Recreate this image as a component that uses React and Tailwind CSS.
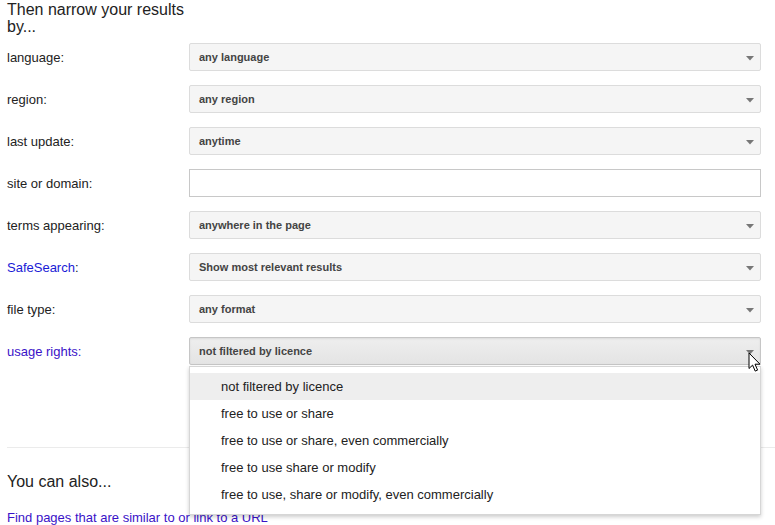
const rows = [
  { label: 'language:', value: 'any language' },
  { label: 'region:', value: 'any region' },
  { label: 'last update:', value: 'anytime' },
  { label: 'site or domain:', input: true },
  { label: 'terms appearing:', value: 'anywhere in the page' },
  { label: 'SafeSearch', link: true, value: 'Show most relevant results' },
  { label: 'file type:', value: 'any format' },
];

const options = [
  'not filtered by licence',
  'free to use or share',
  'free to use or share, even commercially',
  'free to use share or modify',
  'free to use, share or modify, even commercially',
];

function Arrow() {
  return (
    <svg width="8" height="5" viewBox="0 0 8 5" className="absolute right-[6px] top-[12px]">
      <path d="M0 0h8L4 4.5z" fill="#777" />
    </svg>
  );
}

function Select({ value, active, children }) {
  return (
    <div
      className={
        'relative h-[28px] w-[572px] rounded-[2px] border text-[11px] font-bold text-[#444] flex items-center pl-[9px] ' +
        (active
          ? 'border-[#c6c6c6] bg-gradient-to-b from-[#eeeeee] to-[#e4e4e4] shadow-[inset_0_1px_2px_rgba(0,0,0,0.08)]'
          : 'border-[#dcdcdc] bg-[#f5f5f5]')
      }
    >
      {value}
      <Arrow />
      {children}
    </div>
  );
}

export default function App() {
  return (
    <div className="relative h-[525px] w-[775px] overflow-hidden bg-white font-['Liberation_Sans',Arial,sans-serif] text-[#222]">
      <div className="pl-[7px]">
        <h3 className="w-[190px] pt-[1px] text-[16px] leading-[17px] text-[#222]">Then narrow your results by...</h3>

        <div className="mt-[8px] flex flex-col gap-[14px]">
          {rows.map((r) => (
            <div key={r.label} className="flex items-center h-[28px]">
              <div className="w-[182px] pt-[2px] text-[13px]">
                {r.link ? (
                  <>
                    <span className="text-[#1a1ad6]">{r.label}</span>:
                  </>
                ) : (
                  r.label
                )}
              </div>
              {r.input ? (
                <div className="h-[28px] w-[572px] border border-[#c8c8c8] bg-white" />
              ) : (
                <Select value={r.value} />
              )}
            </div>
          ))}

          <div className="flex items-center h-[28px]">
            <div className="w-[182px] pt-[2px] text-[13px] text-[#3a12c8]">usage rights:</div>
            <Select value="not filtered by licence" active>
              <div className="absolute left-[-1px] top-[28px] z-10 w-[572px] border border-[#d6d6d6] bg-white py-[6px] text-[13px] font-normal text-[#222] shadow-[0_2px_4px_rgba(0,0,0,0.2)]">
                {options.map((o, i) => (
                  <div
                    key={o}
                    className={'h-[27px] flex items-center pl-[31px] ' + (i === 0 ? 'bg-[#eeeeee]' : '')}
                  >
                    {o}
                  </div>
                ))}
              </div>
              <svg width="14" height="21" viewBox="0 0 14 21" className="absolute right-[-2px] top-[14px] z-20">
                <path d="M1 1v15.5l3.6-3.4 2.6 6 2.4-1-2.6-5.9H12z" fill="#fff" stroke="#000" strokeWidth="1" strokeLinejoin="round" />
              </svg>
            </Select>
          </div>
        </div>

        <div className="mt-[82px] h-px bg-[#ebebeb]" />

        <div className="mt-[24px] text-[16px] leading-[20px]">You can also...</div>
        <div className="mt-[16px] text-[13px] text-[#3a12c8]">Find pages that are similar to or link to a URL</div>
      </div>
    </div>
  );
}
